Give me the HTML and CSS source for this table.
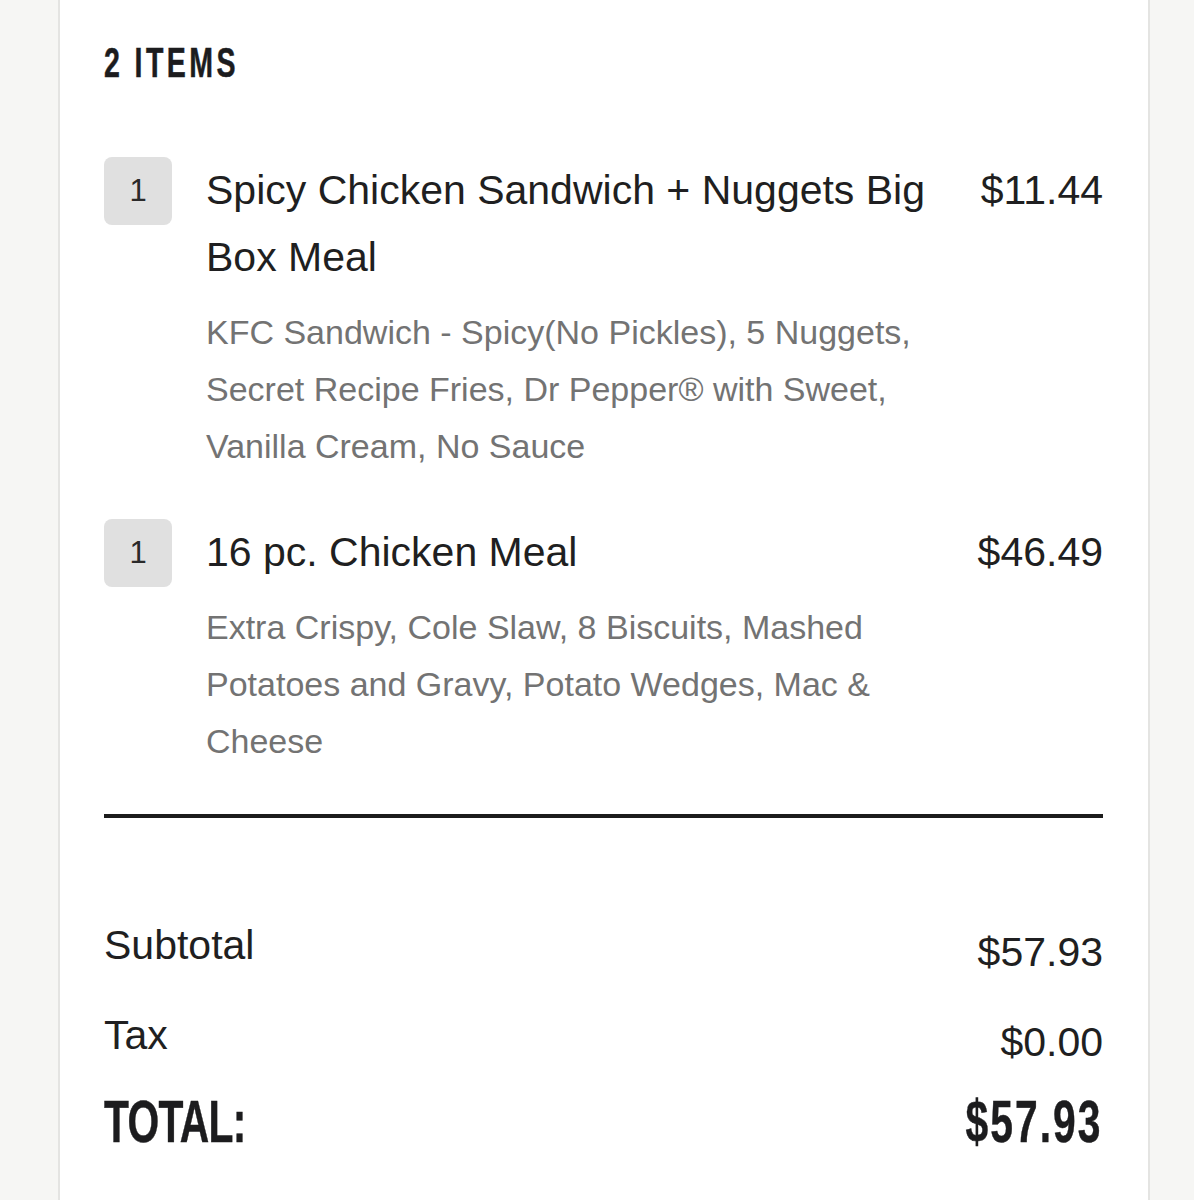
FILE: index.html
```html
<!DOCTYPE html>
<html>
<head>
  <title>Order Summary</title>
  <link rel="stylesheet" href="styles.css">
</head>
<body>
  <div class="card">
    <h2 class="count"><span>2 Items</span></h2>

    <div class="item">
      <div class="qty">1</div>
      <div class="info">
        <div class="name">Spicy Chicken Sandwich + Nuggets Big Box Meal</div>
        <div class="desc">KFC Sandwich - Spicy(No Pickles), 5 Nuggets, Secret Recipe Fries, Dr Pepper® with Sweet, Vanilla Cream, No Sauce</div>
      </div>
      <div class="price">$11.44</div>
    </div>

    <div class="item">
      <div class="qty">1</div>
      <div class="info">
        <div class="name">16 pc. Chicken Meal</div>
        <div class="desc">Extra Crispy, Cole Slaw, 8 Biscuits, Mashed Potatoes and Gravy, Potato Wedges, Mac &amp; Cheese</div>
      </div>
      <div class="price">$46.49</div>
    </div>

    <div class="totals">
      <div class="row">
        <span class="label">Subtotal</span>
        <span class="value">$57.93</span>
      </div>
      <div class="row">
        <span class="label">Tax</span>
        <span class="value">$0.00</span>
      </div>
      <div class="row grand">
        <span class="label">Total:</span>
        <span class="value">$57.93</span>
      </div>
    </div>
  </div>
</body>
</html>
```

FILE: styles.css
```css
body {
  margin: 0;
  background-color: #f6f6f4;
  font-family: "Liberation Sans", Arial, sans-serif;
  color: #1f1f21;
  overflow: hidden;
}

.card {
  box-sizing: border-box;
  width: 1092px;
  min-height: 1200px;
  margin-left: 58px;
  padding: 42px 45px 48px 44px;
  background-color: #fff;
  border-left: 2px solid #e4e4e2;
  border-right: 2px solid #e4e4e2;
}

/* condensed display type: squeeze Liberation Sans Bold */
.count span,
.grand .label,
.grand .value {
  display: inline-block;
  font-weight: bold;
  text-transform: uppercase;
  -webkit-text-stroke: 0.5px currentColor;
  transform: scaleX(0.68);
  transform-origin: left center;
}

.count {
  margin: 0 0 73px;
  font-size: 42px;
  line-height: 42px;
  letter-spacing: 5px;
  color: #1c1c1e;
}

.item {
  display: flex;
  align-items: flex-start;
  margin-bottom: 44px;
}

.qty {
  flex: none;
  width: 68px;
  height: 68px;
  margin-right: 34px;
  display: flex;
  align-items: center;
  justify-content: center;
  background-color: #e0e0e0;
  border-radius: 8px;
  font-size: 31px;
  color: #2a2a2a;
}

.info {
  flex: 1;
  padding-right: 40px;
}

.name {
  font-size: 41px;
  line-height: 67px;
}

.desc {
  margin-top: 13px;
  font-size: 34px;
  line-height: 57px;
  color: #737373;
}

.price {
  flex: none;
  font-size: 41px;
  line-height: 67px;
}

.totals {
  margin-top: 42px;
  padding-top: 104px;
  border-top: 4px solid #1c1c1c;
}

.row {
  display: flex;
  justify-content: space-between;
  align-items: flex-start;
  margin-bottom: 36px;
  font-size: 41px;
  line-height: 47px;
}

.row .value {
  padding-top: 7px;
}

.row.grand {
  margin-top: -10px;
  margin-bottom: 0;
  font-size: 60px;
  line-height: 60px;
  color: #1c1c1e;
}

.grand .label {
  letter-spacing: -1px;
}

.grand .value {
  padding-top: 0;
  letter-spacing: 3px;
  transform-origin: right center;
}
```
